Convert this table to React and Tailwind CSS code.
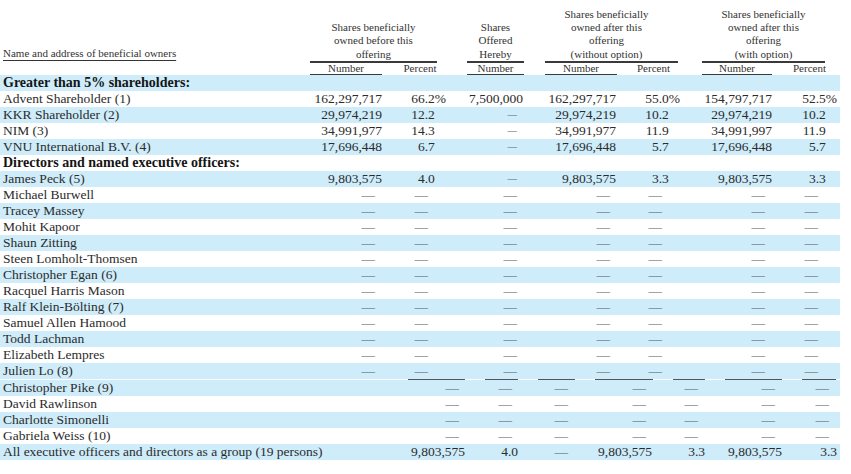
import React from "react";

const BLUE = "bg-[#ceecf9]";

function Pct({ v }) {
  const has = v.endsWith("%");
  const num = has ? v.slice(0, -1) : v;
  return (
    <>
      {num}
      <span className={has ? "" : "invisible"}>%</span>
    </>
  );
}

const TOP_W = ["w-[72px]", "w-[64px]", "w-[77px]", "w-[93px]", "w-[64px]", "w-[92px]", "w-[65px]"];
const MID_W = ["w-[65px]", "w-[53px]", "w-[89px]", "w-[93px]", "w-[52px]", "w-[103px]", "w-[53px]"];
const BOT_W = ["w-[149px]", "w-[53px]", "w-[56px]", "w-[78px]", "w-[52px]", "w-[77px]", "w-[54px]"];
const LAST_W = ["w-[155px]", "w-[53px]", "w-[50px]", "w-[84px]", "w-[53px]", "w-[77px]", "w-[55px]"];

function Row({ blue, children }) {
  return (
    <div className={`flex h-[16px] w-[840px] items-center leading-[16px] ${blue ? BLUE : "bg-white"}`}>
      {children}
    </div>
  );
}

function Name({ children, bold }) {
  return (
    <div
      className={`w-[310px] shrink-0 whitespace-nowrap pl-[3px] ${
        bold ? "text-[14px] font-bold text-[#151515]" : "text-[13.5px]"
      }`}
    >
      {children}
    </div>
  );
}

function TopRow({ name, vals, blue }) {
  return (
    <Row blue={blue}>
      <Name>{name}</Name>
      {vals.map((v, i) => {
        const isPct = i === 1 || i === 4 || i === 6;
        if (v === "—") {
          return (
            <div key={i} className={`${TOP_W[i]} shrink-0 pr-[6px] text-right text-[9.5px] text-[#666]`}>
              —
            </div>
          );
        }
        return (
          <div key={i} className={`${TOP_W[i]} shrink-0 text-right text-[13.5px]`}>
            {isPct ? <Pct v={v} /> : v}
          </div>
        );
      })}
    </Row>
  );
}

function DashRow({ name, blue, widths }) {
  return (
    <Row blue={blue}>
      <Name>{name}</Name>
      {widths.map((w, i) => (
        <div key={i} className={`${w} shrink-0 text-right text-[13.5px] text-[#5a5a5a]`}>
          —
        </div>
      ))}
    </Row>
  );
}

function Group({ width, ml, lines, textPad, subs }) {
  return (
    <div className={`${width} ${ml} shrink-0 flex flex-col`}>
      <div className={`text-center leading-[13.3px] ${textPad}`}>
        {lines.map((l) => (
          <div key={l}>{l}</div>
        ))}
      </div>
      <div className="h-[2px] bg-[#3a3a3a]" />
      <div className="flex">
        {subs.map(([label, cls]) => (
          <div key={label} className={`${cls} shrink-0 border-b text-center leading-[11px]`}>
            {label}
          </div>
        ))}
      </div>
    </div>
  );
}

export default function App() {
  const top = [
    ["Advent Shareholder (1)", ["162,297,717", "66.2%", "7,500,000", "162,297,717", "55.0%", "154,797,717", "52.5%"], false],
    ["KKR Shareholder (2)", ["29,974,219", "12.2", "—", "29,974,219", "10.2", "29,974,219", "10.2"], true],
    ["NIM (3)", ["34,991,977", "14.3", "—", "34,991,977", "11.9", "34,991,997", "11.9"], false],
    ["VNU International B.V. (4)", ["17,696,448", "6.7", "—", "17,696,448", "5.7", "17,696,448", "5.7"], true],
  ];
  const mid = [
    "Michael Burwell",
    "Tracey Massey",
    "Mohit Kapoor",
    "Shaun Zitting",
    "Steen Lomholt-Thomsen",
    "Christopher Egan (6)",
    "Racquel Harris Mason",
    "Ralf Klein-Bölting (7)",
    "Samuel Allen Hamood",
    "Todd Lachman",
    "Elizabeth Lempres",
    "Julien Lo (8)",
  ];
  const bot = ["Christopher Pike (9)", "David Rawlinson", "Charlotte Simonelli", "Gabriela Weiss (10)"];
  const lastVals = ["9,803,575", "4.0", "—", "9,803,575", "3.3", "9,803,575", "3.3"];

  return (
    <div className="h-[474px] w-[851px] overflow-hidden bg-white font-['Liberation_Serif',serif] text-[#2b2b2b]">
      {/* header */}
      <div className="flex h-[75px] items-end text-[11px] text-[#333]">
        <div className="w-[310px] shrink-0 pb-[15px] pl-[3px] leading-[13.3px]">
          <span className="underline decoration-1 underline-offset-[3px]">Name and address of beneficial owners</span>
        </div>
        <Group
          width="w-[127px]"
          ml=""
          textPad=""
          lines={["Shares beneficially", "owned before this", "offering"]}
          subs={[
            ["Number", "w-[72px] border-[#3a3a3a]"],
            ["Percent", "ml-[21px] w-[34px] border-transparent"],
          ]}
        />
        <Group
          width="w-[57px]"
          ml="ml-[30px]"
          textPad=""
          lines={["Shares", "Offered", "Hereby"]}
          subs={[["Number", "w-[57px] border-[#3a3a3a]"]]}
        />
        <Group
          width="w-[133px]"
          ml="ml-[21px]"
          textPad="pr-[10px]"
          lines={["Shares beneficially", "owned after this", "offering", "(without option)"]}
          subs={[
            ["Number", "w-[72px] border-[#3a3a3a]"],
            ["Percent", "ml-[20px] w-[33px] border-transparent"],
          ]}
        />
        <Group
          width="w-[123px]"
          ml="ml-[24px]"
          textPad=""
          lines={["Shares beneficially", "owned after this", "offering", "(with option)"]}
          subs={[
            ["Number", "w-[70px] border-[#3a3a3a]"],
            ["Percent", "ml-[21px] w-[32px] border-transparent"],
          ]}
        />
      </div>

      {/* body */}
      <div className="flex flex-col">
        <Row blue>
          <Name bold>Greater than 5% shareholders:</Name>
        </Row>
        {top.map(([n, v, b]) => (
          <TopRow key={n} name={n} vals={v} blue={b} />
        ))}
        <Row>
          <Name bold>Directors and named executive officers:</Name>
        </Row>
        <TopRow name="James Peck (5)" vals={lastVals} blue />
        {mid.map((n, i) => (
          <DashRow key={n} name={n} blue={i % 2 === 1} widths={MID_W} />
        ))}
        <div className="flex h-px w-[840px] gap-[20px] bg-white pl-[408px]">
          <div className="h-px w-[57px] bg-[#555]" />
          <div className="h-px w-[33px] bg-[#555]" />
          <div className="h-px w-[37px] bg-[#555]" />
          <div className="h-px w-[58px] bg-[#555]" />
          <div className="h-px w-[32px] bg-[#555]" />
          <div className="h-px w-[57px] bg-[#555]" />
          <div className="h-px w-[34px] bg-[#555]" />
        </div>
        {bot.map((n, i) => (
          <DashRow key={n} name={n} blue={i % 2 === 0} widths={BOT_W} />
        ))}
        <Row blue>
          <Name>All executive officers and directors as a group (19 persons)</Name>
          {lastVals.map((v, i) => (
            <div
              key={i}
              className={`${LAST_W[i]} shrink-0 text-right text-[13.5px] ${v === "—" ? "text-[#5a5a5a]" : ""}`}
            >
              {v}
            </div>
          ))}
        </Row>
      </div>
    </div>
  );
}
